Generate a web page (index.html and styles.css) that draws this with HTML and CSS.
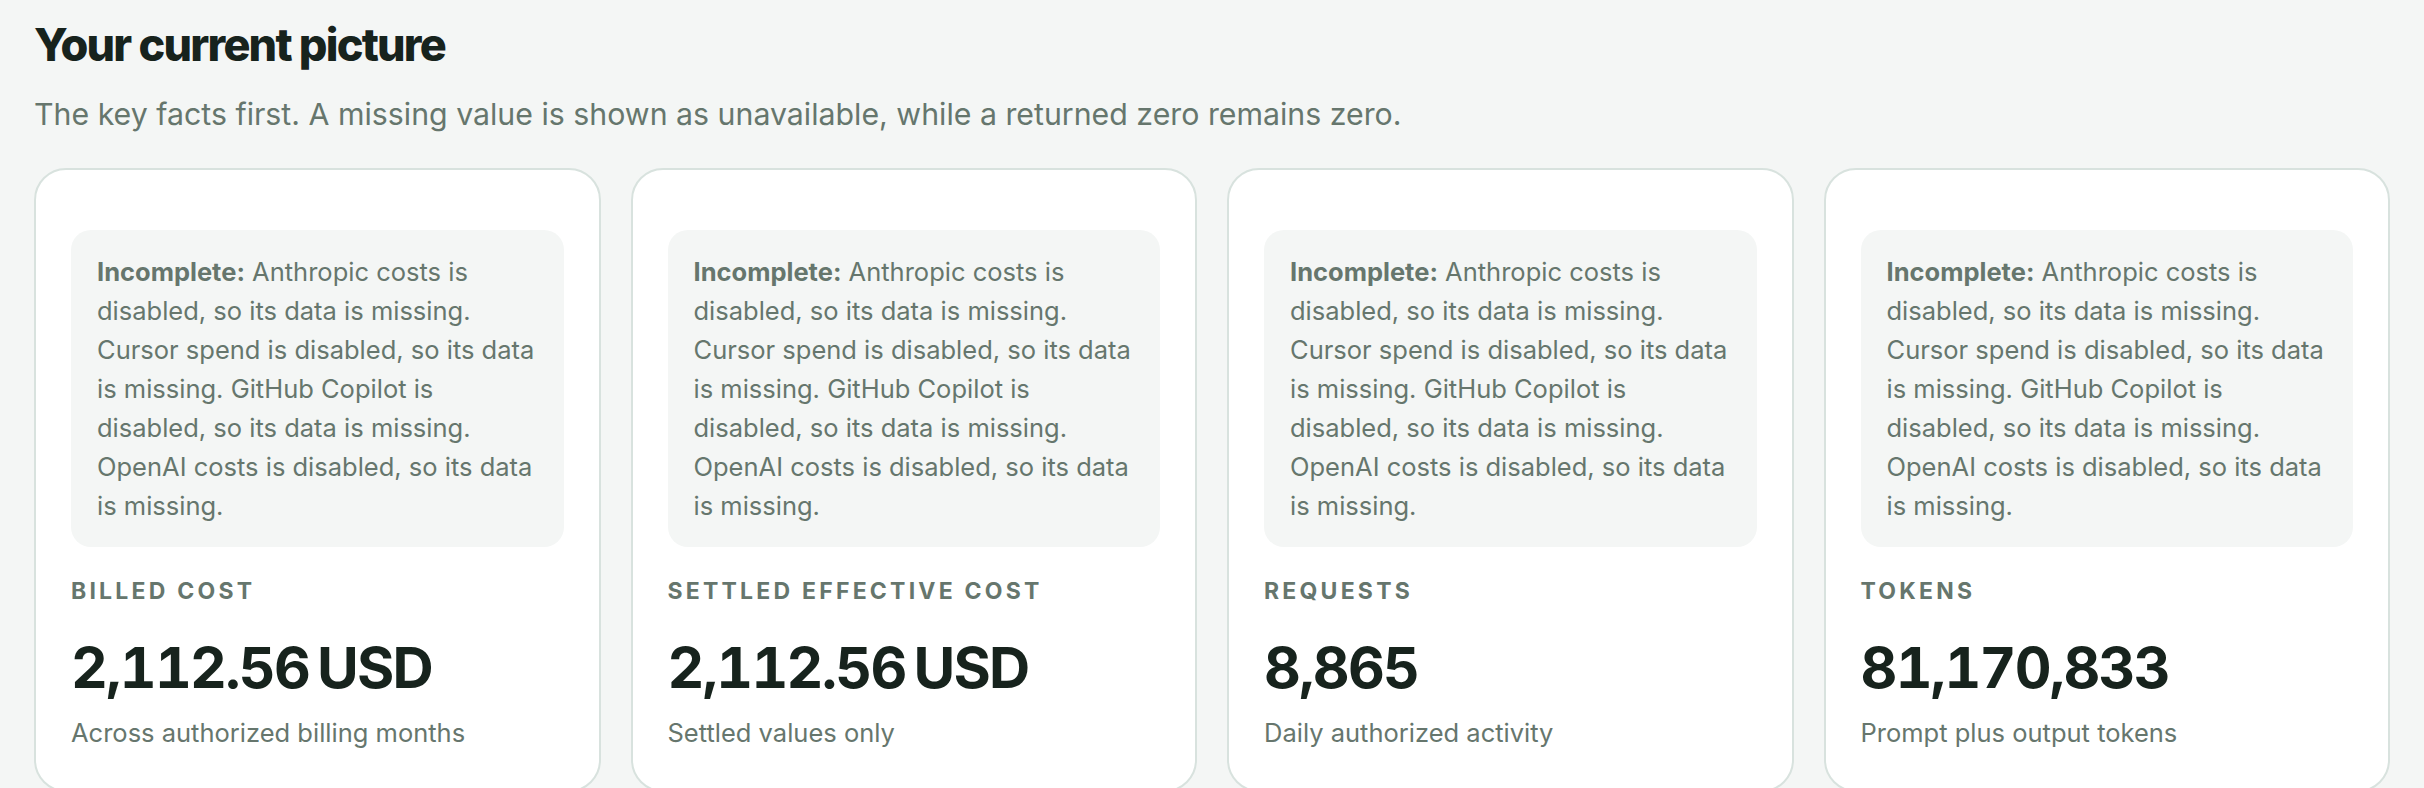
FILE: index.html
```html
<!DOCTYPE html>
<html lang="en">
<head>
    <meta charset="UTF-8">
    <title>Your current picture</title>
    <link rel="stylesheet" href="styles.css">
</head>
<body>

<section class="overview">
    <h1>Your current picture</h1>
    <p class="lead">The key facts first. A missing value is shown as unavailable, while a returned zero remains zero.</p>

    <div class="cards">
        <div class="card">
            <div class="notice"><strong>Incomplete:</strong> Anthropic costs is disabled, so its data is missing. Cursor spend is disabled, so its data is missing. GitHub Copilot is disabled, so its data is missing. OpenAI costs is disabled, so its data is missing.</div>
            <div class="label">Billed cost</div>
            <div class="value">2,112.56 USD</div>
            <div class="desc">Across authorized billing months</div>
        </div>
        <div class="card">
            <div class="notice"><strong>Incomplete:</strong> Anthropic costs is disabled, so its data is missing. Cursor spend is disabled, so its data is missing. GitHub Copilot is disabled, so its data is missing. OpenAI costs is disabled, so its data is missing.</div>
            <div class="label">Settled effective cost</div>
            <div class="value">2,112.56 USD</div>
            <div class="desc">Settled values only</div>
        </div>
        <div class="card">
            <div class="notice"><strong>Incomplete:</strong> Anthropic costs is disabled, so its data is missing. Cursor spend is disabled, so its data is missing. GitHub Copilot is disabled, so its data is missing. OpenAI costs is disabled, so its data is missing.</div>
            <div class="label">Requests</div>
            <div class="value">8,865</div>
            <div class="desc">Daily authorized activity</div>
        </div>
        <div class="card">
            <div class="notice"><strong>Incomplete:</strong> Anthropic costs is disabled, so its data is missing. Cursor spend is disabled, so its data is missing. GitHub Copilot is disabled, so its data is missing. OpenAI costs is disabled, so its data is missing.</div>
            <div class="label">Tokens</div>
            <div class="value">81,170,833</div>
            <div class="desc">Prompt plus output tokens</div>
        </div>
    </div>
</section>

</body>
</html>
```

FILE: styles.css
```css
body {
    font-family: Inter, "Noto Sans", sans-serif;
    background: #f4f6f5;
    color: #17231d;
    margin: 0;
}
.overview {
    padding: 19px 34px 0;
}
h1 {
    margin: 0;
    font-size: 45px;
    line-height: 1.15;
    font-weight: 800;
    letter-spacing: -0.04em;
    color: #17231d;
}
.lead {
    margin: 21px 0 0;
    font-size: 30.3px;
    line-height: 1.5;
    color: #66766d;
}
.cards {
    display: grid;
    grid-template-columns: repeat(4, 1fr);
    gap: 30px;
    margin-top: 31px;
}
.card {
    background: #fff;
    border: 2px solid #d8e2de;
    border-radius: 32px;
    padding: 60px 35px 37px;
}
.notice {
    background: #f4f6f5;
    border-radius: 20px;
    padding: 22px 26px;
    font-size: 25.5px;
    line-height: 39px;
    color: #66766d;
}
.notice strong {
    font-weight: 700;
}
.label {
    margin-top: 31px;
    font-size: 23px;
    line-height: 1.2;
    font-weight: 700;
    letter-spacing: 0.14em;
    text-transform: uppercase;
    color: #66766d;
}
.value {
    margin-top: 31px;
    font-size: 57px;
    line-height: 1.1;
    font-weight: 700;
    letter-spacing: -0.03em;
    word-spacing: -0.1em;
    font-variant-numeric: tabular-nums;
    color: #17231d;
}
.desc {
    margin-top: 15px;
    font-size: 25.5px;
    line-height: 1.5;
    color: #66766d;
}
```
